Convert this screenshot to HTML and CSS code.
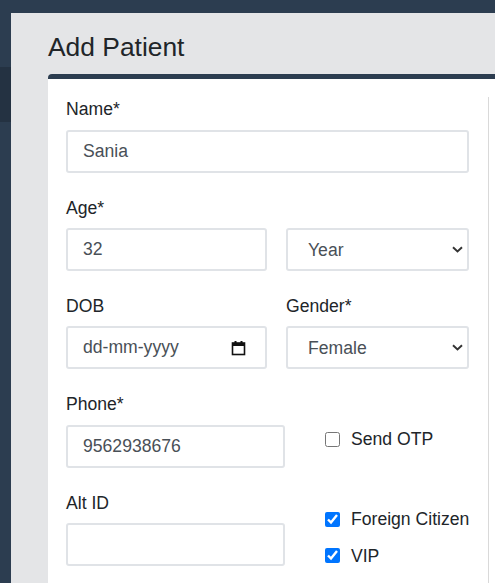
FILE: index.html
```html
<!DOCTYPE html>
<html lang="en">
<head>
<meta charset="utf-8">
<title>Add Patient</title>
<link rel="stylesheet" href="styles.css">
</head>
<body>
<div class="app">
  <aside class="rail">
    <div class="rail-active"></div>
  </aside>
  <div class="modal">
    <h1 class="modal-title">Add Patient</h1>
    <div class="card">
      <form class="form">
        <div class="group">
          <label class="label" for="name">Name*</label>
          <input class="control" id="name" type="text" value="Sania">
        </div>
        <div class="row row-a">
          <div class="group">
            <label class="label" for="age">Age*</label>
            <input class="control" id="age" type="text" value="32">
          </div>
          <div class="group group-nolabel">
            <div class="select-wrap">
              <select class="control select"><option>Year</option></select>
              <svg class="chev" width="11" height="7" viewBox="0 0 11 7"><path d="M1 1.2 L5.5 5.5 L10 1.2" fill="none" stroke="#333" stroke-width="1.9"/></svg>
            </div>
          </div>
        </div>
        <div class="row row-a">
          <div class="group">
            <label class="label">DOB</label>
            <div class="control date">
              <span>dd-mm-yyyy</span>
              <svg class="cal" width="15" height="16" viewBox="0 0 15 16"><rect x="1.5" y="3" width="12" height="11.5" fill="none" stroke="#111" stroke-width="1.6"/><rect x="1.5" y="3" width="12" height="3" fill="#111"/><rect x="3.5" y="1" width="2" height="3" fill="#111"/><rect x="9.5" y="1" width="2" height="3" fill="#111"/></svg>
            </div>
          </div>
          <div class="group">
            <label class="label" for="gender">Gender*</label>
            <div class="select-wrap">
              <select class="control select" id="gender"><option>Female</option></select>
              <svg class="chev" width="11" height="7" viewBox="0 0 11 7"><path d="M1 1.2 L5.5 5.5 L10 1.2" fill="none" stroke="#333" stroke-width="1.9"/></svg>
            </div>
          </div>
        </div>
        <div class="row row-b">
          <div class="group">
            <label class="label" for="phone">Phone*</label>
            <input class="control" id="phone" type="text" value="9562938676">
          </div>
          <div class="checks checks-otp">
            <label class="check"><input type="checkbox"><span>Send OTP</span></label>
          </div>
        </div>
        <div class="row row-b">
          <div class="group">
            <label class="label" for="alt">Alt ID</label>
            <input class="control" id="alt" type="text">
          </div>
          <div class="checks checks-flags">
            <label class="check"><input type="checkbox" checked><span>Foreign Citizen</span></label>
            <label class="check"><input type="checkbox" checked><span>VIP</span></label>
          </div>
        </div>
      </form>
      <div class="divider"></div>
    </div>
  </div>
</div>
</body>
</html>
```
FILE: styles.css
```css
* { box-sizing: border-box; }
html, body { margin: 0; padding: 0; }
body {
  background: #2c3d50;
  font-family: "Liberation Sans", Arial, sans-serif;
  color: #212529;
  width: 495px;
  height: 583px;
  overflow: hidden;
}
.app {
  display: flex;
  padding-top: 13px;
  height: 583px;
}
.rail {
  width: 11px;
  flex: none;
  background: #2c3d50;
}
.rail-active {
  margin-top: 54px;
  height: 55px;
  background: #243242;
}
.modal {
  flex: 1;
  background: #e4e5e7;
  padding: 19px 0 0 37px;
  overflow: hidden;
}
.modal-title {
  margin: 0;
  font-size: 26.4px;
  line-height: 31.7px;
  font-weight: 400;
  color: #212529;
}
.card {
  margin-top: 10.5px;
  width: 470px;
  height: 520px;
  background: #fff;
  border-top: 5px solid #2c3d50;
  border-top-left-radius: 4px;
  display: flex;
}
.form {
  width: 440px;
  padding: 17px 19px 0 18px;
  flex: none;
}
.divider {
  margin-top: 18px;
  width: 1px;
  background: #d9d9d9;
}
.group {
  margin-bottom: 22px;
  display: flex;
  flex-direction: column;
}
.label {
  font-size: 17.6px;
  line-height: 26.4px;
  margin-bottom: 7px;
}
.control {
  height: 43px;
  width: 100%;
  border: 2px solid #e0e3e7;
  border-radius: 3px;
  background: #fff;
  padding: 0 15px;
  font-family: "Liberation Sans", Arial, sans-serif;
  font-size: 17.6px;
  color: #495057;
  outline: none;
}
.row {
  display: grid;
}
.row-a {
  grid-template-columns: 201px 183px;
  column-gap: 19px;
}
.row-b {
  grid-template-columns: 219px 184px;
  column-gap: 0;
}
.group-nolabel {
  padding-top: 33.4px;
}
.select-wrap {
  position: relative;
}
.select {
  appearance: none;
  -webkit-appearance: none;
  padding-left: 20px;
}
.chev {
  position: absolute;
  right: 6px;
  top: 18px;
  pointer-events: none;
}
.date {
  display: flex;
  align-items: center;
  justify-content: space-between;
  padding-right: 19px;
}
.cal { margin-top: 1px; }
.checks {
  display: flex;
  flex-direction: column;
  gap: 10px;
  padding-left: 40px;
  min-width: 0;
}
.checks-otp { padding-top: 35px; }
.checks-flags { padding-top: 16.5px; }
.check {
  display: flex;
  align-items: center;
  font-size: 17.6px;
  line-height: 26.4px;
  color: #212529;
  white-space: nowrap;
}
.check input {
  flex: none;
  width: 15px;
  height: 15px;
  margin: 0 11px 0 0;
  accent-color: #0075ff;
}
```
